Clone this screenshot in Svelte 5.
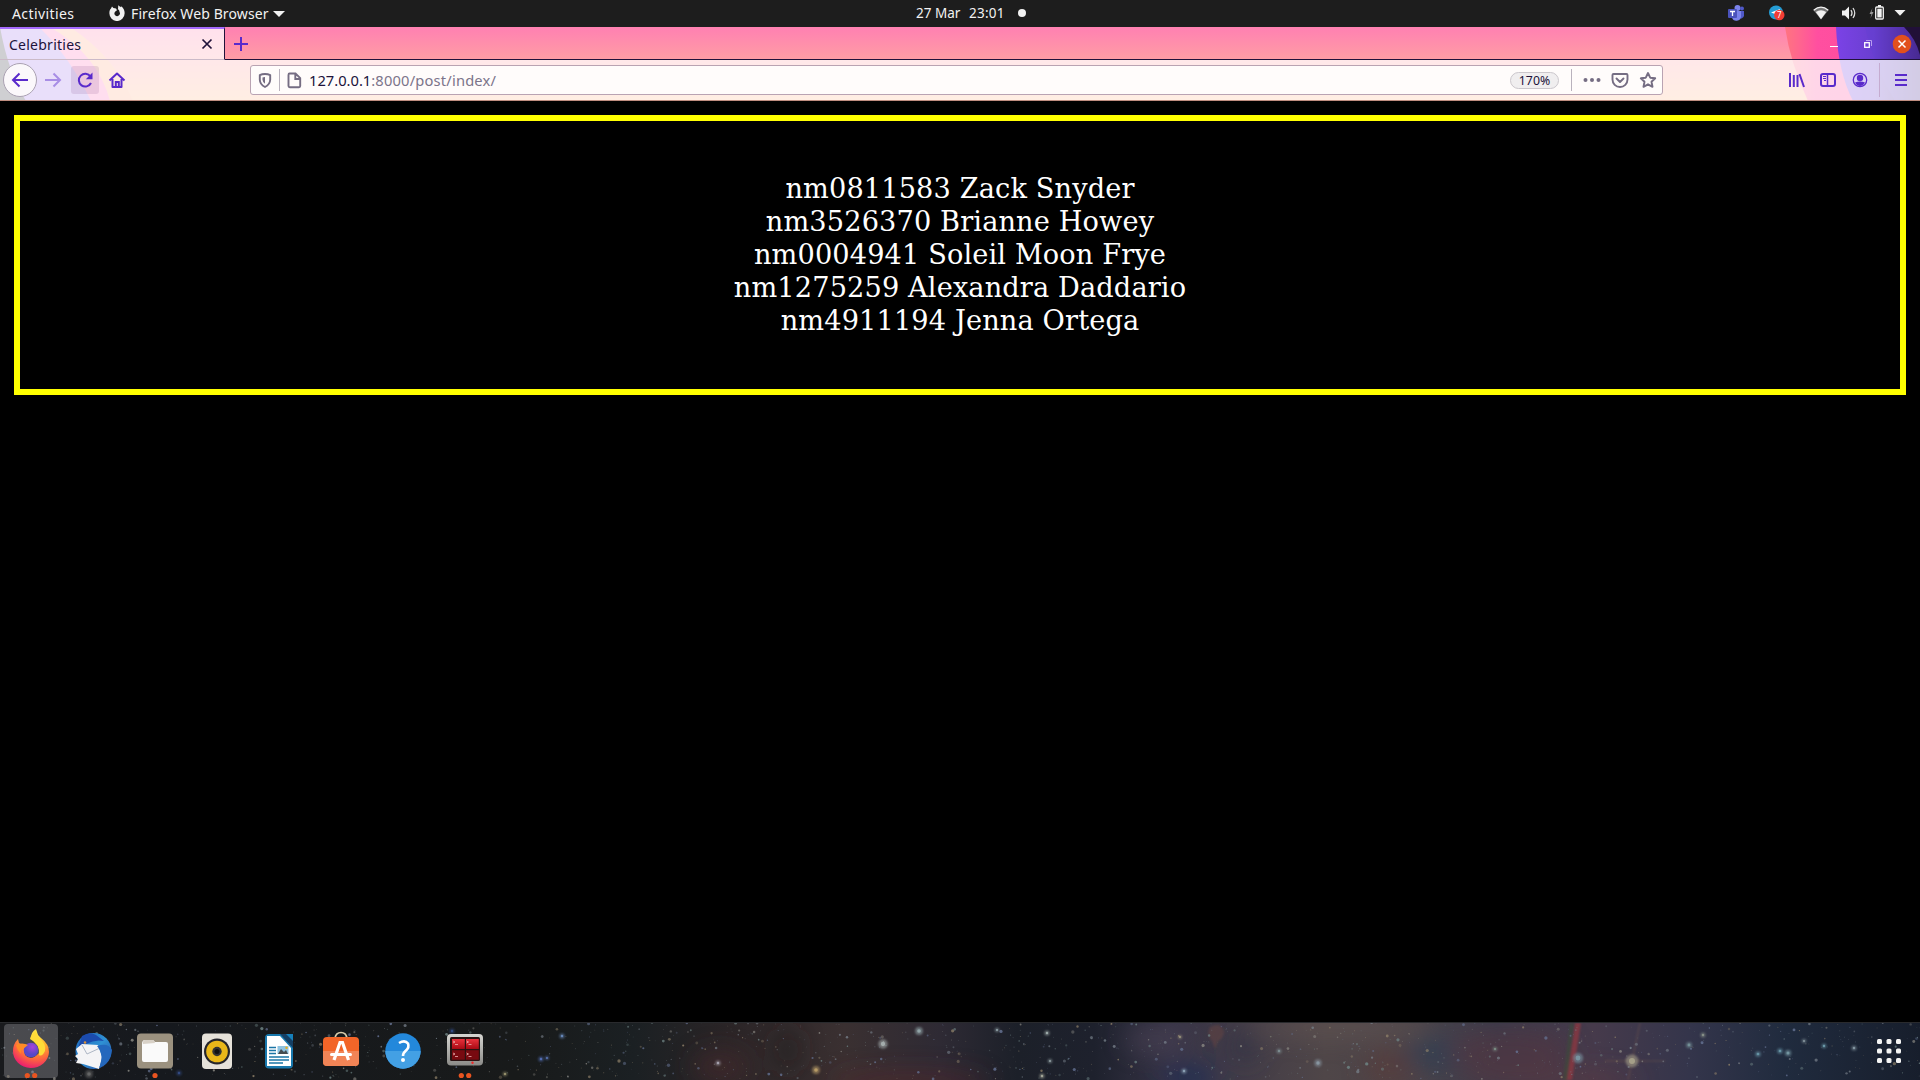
<script>
  const celebrities = [
    ['nm0811583', 'Zack Snyder'],
    ['nm3526370', 'Brianne Howey'],
    ['nm0004941', 'Soleil Moon Frye'],
    ['nm1275259', 'Alexandra Daddario'],
    ['nm4911194', 'Jenna Ortega'],
  ];

  // Small seeded generator so the star field is the same on every load.
  let seed = 4711;
  const rnd = () => (seed = (seed * 16807) % 2147483647) / 2147483647;
  const tints = ['#8c8a84', '#77808a', '#8f8169', '#6f8585', '#667394'];
  const stars = Array.from({ length: 1250 }, () => ({
    x: rnd() * 1920,
    y: rnd() * 57,
    r: 0.4 + Math.pow(rnd(), 4) * 1.3,
    o: 0.3 + rnd() * 0.55,
    c: tints[Math.floor(rnd() * 5)],
  }));
  const bright = [
    [562, 14, 2, '#6687b8'], [541, 37, 2, '#526eb5'], [547, 36, 1.6, '#5c78b8'], [505, 52, 1.8, '#a09a74'],
    [658, 42, 2, '#a6a2ae'], [728, 48, 3.4, '#b79b67'], [883, 22, 3.6, '#a3acac'], [919, 9, 3, '#91a4a8'],
    [816, 48, 3, '#b79b67'], [718, 41, 2, '#a6a2ae'],
    [997, 8, 1.8, '#8f9fa5'], [1047, 11, 2, '#9daaa9'], [1050, 39, 1.8, '#8f9da0'], [1042, 54, 2, '#a3a698'],
    [1184, 49, 2, '#8ba0b4'], [1180, 15, 1.6, '#a09a80'], [1318, 41, 2.8, '#8795a0'], [1279, 29, 2, '#7d8d90'],
    [1495, 27, 1.8, '#7f9389'], [1578, 36, 4, '#7893a0'], [1632, 39, 5, '#a59f88'], [1689, 23, 2.4, '#738f96'],
    [1703, 13, 2, '#868f87'], [1758, 32, 2.2, '#6693a4'], [1780, 29, 2.2, '#6693a4'], [1788, 31, 2.5, '#7395a0'],
    [1824, 24, 1.9, '#6b9aaa'], [1854, 26, 2, '#8396a0'], [1804, 19, 1.8, '#85949c'], [89, 52, 3, '#656666'],
    [179, 51, 2, '#334a82'], [452, 9, 2, '#334a82'],
  ].filter(([x]) => x !== 658 && x !== 728);
  const dotsGrid = [0, 1, 2, 3, 4, 5, 6, 7, 8];
</script>

<div class="desktop">
  <header class="topbar">
    <span class="activities">Activities</span>
    <svg class="fx" width="16" height="16" viewBox="0 0 16 16"><path fill="#f2f2f2" d="M3 1.4 4.4 3 7 3.6 8 5.3 6.3 6.5A2.7 2.7 0 1 0 10.5 7C10.4 5.3 9.5 4.6 8.8 4.3 9.3 3.5 9 2.6 9.3.2c1 .5 1.7 1.2 2.1 2l.6-1c2.7 1.7 3.8 4.5 3.6 7.3A7.6 7.6 0 0 1 .4 8.4C.3 6 .9 4.5 2 3.500z" /></svg>
    <span class="app">Firefox Web Browser</span>
    <i class="caret"></i>
    <div class="clock"><span class="date">27 Mar</span><span class="time">23:01</span><i></i></div>
    <div class="tray">
      <svg width="220" height="27" viewBox="0 0 220 27">
        <circle cx="37.500" cy="8" r="3" fill="#7b83eb" /><circle cx="42" cy="8.500" r="2" fill="#5059c9" />
        <path fill="#5059c9" d="M38 11h6v5a3.500 3.500 0 0 1-5 2z" /><path fill="#7b83eb" d="M32 11h9v5.500a4.600 4.600 0 0 1-9 1z" />
        <rect x="28" y="9" width="9" height="9" rx="1" fill="#4b53bc" /><path d="M30 11.500h5M32.500 11.500V16" stroke="#fff" stroke-width="1.300" />
        <circle cx="76" cy="12.500" r="7" fill="#259cd4" /><path d="M71 12.500 80 9l-1 7-4-2z" fill="#fff" />
        <circle cx="79.300" cy="15" r="5.200" fill="#f23c34" /><text x="79.300" y="18.200" class="badge" text-anchor="middle">7</text>
        <path d="M113.500 10.200Q121 3.800 128.500 10.200L121 19.500Z" fill="#777" /><path d="M113.700 10.200Q121 4 128.300 10.200" fill="none" stroke="#f2f2f2" stroke-width="1.300" /><path d="M115.800 12Q121 8.500 126.200 12L121 19.300Z" fill="#f2f2f2" />
        <path d="M142 10.500h3l4-4v13l-4-4h-3z" fill="#f2f2f2" /><path d="M151 10q2 3 0 6M153 8q3.500 5 0 10" fill="none" stroke="#ddd" stroke-width="1.300" />
        <path d="M172.500 8 169.500 14h2l-1 4 3-6h-2z" fill="#999" />
        <path d="M178 5h3v2h-3z" fill="#f2f2f2" /><rect x="175.700" y="7" width="7.600" height="12" rx="1" fill="none" stroke="#f2f2f2" stroke-width="1.300" /><rect x="177.300" y="8.700" width="4.400" height="8.800" fill="#f2f2f2" />
        <path d="M194.500 10h11l-5.500 5.700z" fill="#f2f2f2" />
      </svg>
    </div>
  </header>

  <div class="browser">
    <svg class="theme" width="1920" height="74" viewBox="0 0 1920 74">
      <defs>
        <linearGradient id="pink" x2="0" y2="1"><stop stop-color="#ff80b2" /><stop offset=".45" stop-color="#ff9ea4" /><stop offset="1" stop-color="#ffb889" /></linearGradient>
        <linearGradient id="hot" x2="1" y2="0"><stop stop-color="#ff7480" /><stop offset=".1" stop-color="#ff668e" /><stop offset=".24" stop-color="#ff4fa0" /><stop offset="1" stop-color="#fa4a9c" /></linearGradient>
        <linearGradient id="vio" x2="1" y2="0"><stop stop-color="#7b42e6" /><stop offset=".45" stop-color="#6a3fd0" /><stop offset="1" stop-color="#3a1f70" /></linearGradient>
      </defs>
      <rect width="1920" height="74" fill="url(#pink)" />
      <path d="M0 0H70Q115 30 133 74H0z" fill="#ffad88" /><path d="M0 0H50Q98 28 110 74H0z" fill="#ff75bb" />
      <path d="M0 0H39Q70 30 91 74H0z" fill="#a579eb" /><path d="M0 0Q8 45 26 74H0z" fill="#383645" />
      <path d="M1785 0Q1790 35 1808 74H1920V0z" fill="url(#hot)" />
      <path d="M1836 0Q1838 45 1853 74H1920V0z" fill="url(#vio)" />
      <path d="M1865 0Q1874 40 1895 74H1920V0z" fill="#6240d0" opacity=".35" />
      <path d="M1904 0Q1916 12 1920 28V0z" fill="#211038" />
    </svg>
    <div class="tabs">
      <div class="tab">
        <span>Celebrities</span>
        <svg width="12" height="12" viewBox="0 0 12 12"><path d="m1.500 1.500 9 9m0-9-9 9" stroke="#20123a" stroke-width="1.700" /></svg>
      </div>
      <svg class="plus" width="14" height="14" viewBox="0 0 14 14"><path d="M7 0v14M0 7h14" stroke="#592acb" stroke-width="2" /></svg>
      <svg class="winctl" width="100" height="33" viewBox="0 0 100 33">
        <path d="M10 19.500h8" stroke="#fff" /><path d="M46 13.500h5.500V19" fill="none" stroke="#b79df0" />
        <rect x="44.700" y="15.700" width="4.600" height="4.600" fill="none" stroke="#fff" stroke-width="1.300" />
        <circle cx="82" cy="17" r="9.300" fill="#e2501c" /><path d="m78.500 13.500 7 7m0-7-7 7" stroke="#fff" stroke-width="1.500" />
      </svg>
    </div>
    <div class="nav">
      <svg class="navicons" width="140" height="40" viewBox="0 0 140 40" fill="none" stroke="#592acb" stroke-width="2">
        <circle cx="20" cy="20" r="16.500" fill="#fbf8fb" stroke="#aaa1b2" stroke-width="1" />
        <path d="M28 20H13m6.500-6.500L13 20l6.500 6.500" />
        <path d="M45 20h15m-6.500-6.500L60 20l-6.500 6.500" opacity=".45" />
        <rect x="71" y="6" width="28" height="28" rx="3" fill="#8a5590" fill-opacity=".17" stroke="none" />
        <path d="M90.500 16.500A6.400 6.400 0 1 0 91 23" /><path d="M92.500 12.500v6.700H85.800z" fill="#592acb" stroke="none" />
        <path d="m109.500 20.500 7.500-7 7.500 7M112.500 19v8h9V19" stroke-linejoin="round" /><path d="M115.800 27v-5h3v5" />
      </svg>
      <div class="url">
        <svg width="56" height="28" viewBox="0 0 56 28" fill="none" stroke="#756d83" stroke-width="1.900">
          <path d="M14 8q-3 0-5.200 1.200v4.500Q9 18.500 14 21q5-2.500 5.200-7.300V9.200Q17 8 14 8z" /><path d="M14 11q-1.500 0-2.500.5v2.300q.2 2.700 2.500 4z" fill="#756d83" stroke="none" />
          <path d="M28.500 3v22" stroke="#b9b2bd" stroke-width="1" />
          <path d="M38.500 7.500h6l4.700 4.700v7.800q0 1.200-1.200 1.200h-9.200q-1.300 0-1.300-1.200V9q0-1.500 1-1.500zM44.300 8v5h5" />
        </svg>
        <span class="address"><b>127.0.0.1</b>:8000/post/index/</span>
        <span class="zoom">170%</span>
        <svg width="91" height="28" viewBox="0 0 91 28" fill="none" stroke="#756d83" stroke-width="1.900">
          <path d="M.500 3v22" stroke="#b9b2bd" stroke-width="1" />
          <g fill="#756d83" stroke="none"><circle cx="14.500" cy="14" r="2" /><circle cx="21" cy="14" r="2" /><circle cx="27.500" cy="14" r="2" /></g>
          <path d="M42.500 8h13q1 0 1 1v4.500a7.500 7.500 0 0 1-15 0V9q0-1 1-1zM45.500 12.500l3.500 3.500 3.500-3.500" stroke-linejoin="round" stroke-linecap="round" />
          <path d="m77 7 2.200 4.700 5 .6-3.700 3.500 1 5-4.500-2.500-4.500 2.500 1-5-3.700-3.500 5-.6z" stroke-linejoin="round" />
        </svg>
      </div>
      <svg class="tools" width="140" height="40" viewBox="0 0 140 40" fill="none" stroke="#592acb" stroke-width="2">
        <path d="M10 13v14M13.800 15v12M17.500 15v12M19.500 14l4.500 13" />
        <rect x="41" y="14" width="14" height="12" rx="2" /><path d="M47.500 14v12" stroke-width="1.500" /><path d="M43 16.500h3M43 18.500h3M44 20.500h2" stroke-width="1" />
        <circle cx="80" cy="20" r="6.700" stroke-width="1.300" /><circle cx="80" cy="18" r="3.200" fill="#592acb" stroke="none" /><path d="M75 22.500q5-2 10 0-2 3.500-5 3.500t-5-3.500z" fill="#592acb" stroke="none" />
        <path d="M99.500 3v34" stroke="#c5abd0" stroke-width="1" />
        <path d="M115 15h12M115 20h12M115 25h12" />
      </svg>
    </div>
  </div>

  <main>
    <section>
      {#each celebrities as [id, name]}
        <div class="person">{id} {name}</div>
      {/each}
    </section>
  </main>

  <footer class="dock">
    <svg width="1920" height="58" viewBox="0 0 1920 58">
      <defs>
        <linearGradient id="sky" x2="1" y2="0">
          <stop stop-color="#191a1d" /><stop offset=".08" stop-color="#16191e" /><stop offset=".27" stop-color="#181a1a" /><stop offset=".33" stop-color="#1b2023" /><stop offset=".38" stop-color="#2b2527" />
          <stop offset=".44" stop-color="#3a3031" /><stop offset=".49" stop-color="#2e2a34" /><stop offset=".53" stop-color="#1c2029" /><stop offset=".57" stop-color="#1e212d" />
          <stop offset=".61" stop-color="#373446" /><stop offset=".64" stop-color="#413b47" /><stop offset=".69" stop-color="#4f4648" /><stop offset=".74" stop-color="#4a4349" />
          <stop offset=".78" stop-color="#393b4b" /><stop offset=".83" stop-color="#463a4b" /><stop offset=".88" stop-color="#34354b" /><stop offset=".93" stop-color="#202b3e" /><stop offset="1" stop-color="#171e2c" />
        </linearGradient>
        <filter id="haze" x="-30%" y="-50%" width="160%" height="200%"><feGaussianBlur stdDeviation="12" /></filter>
        <filter id="glow" x="-100%" y="-100%" width="300%" height="300%"><feGaussianBlur stdDeviation="1" /></filter>
        <radialGradient id="flame" cx=".65" cy=".1" r=".95"><stop stop-color="#fff04e" /><stop offset=".4" stop-color="#ffb42e" /><stop offset=".7" stop-color="#ff693c" /><stop offset="1" stop-color="#e81873" /></radialGradient>
        <radialGradient id="globe" cx=".6" cy=".3"><stop stop-color="#a944d9" /><stop offset="1" stop-color="#5848c8" /></radialGradient>
        <linearGradient id="bird" x2="1" y2="1"><stop stop-color="#1c62b6" /><stop offset=".5" stop-color="#2f91d4" /><stop offset="1" stop-color="#26479f" /></linearGradient>
        <linearGradient id="red" x2="0" y2="1"><stop stop-color="#e8323c" /><stop offset="1" stop-color="#a90a14" /></linearGradient>
        <linearGradient id="metal" x2="0" y2="1"><stop stop-color="#d6d6d2" /><stop offset="1" stop-color="#8b8b88" /></linearGradient>
      </defs>
      <rect width="1920" height="58" fill="url(#sky)" />
      <g filter="url(#haze)" opacity=".6">
        <ellipse cx="720" cy="45" rx="28" ry="16" fill="#482b2d" /><ellipse cx="788" cy="28" rx="12" ry="22" fill="#211e1e" />
        <ellipse cx="910" cy="60" rx="80" ry="10" fill="#58282b" /><ellipse cx="1190" cy="55" rx="30" ry="12" fill="#142c5c" />
        <ellipse cx="1155" cy="18" rx="30" ry="12" fill="#51465a" /><ellipse cx="1245" cy="25" rx="14" ry="16" fill="#2b2d45" />
        <ellipse cx="1340" cy="5" rx="90" ry="10" fill="#665855" />
        <ellipse cx="1390" cy="45" rx="25" ry="20" fill="#5b3a38" /><ellipse cx="1440" cy="32" rx="35" ry="16" fill="#283d57" />
        <ellipse cx="1510" cy="30" rx="60" ry="25" fill="#553640" /><ellipse cx="1550" cy="58" rx="90" ry="8" fill="#63373c" />
      </g>
      <path d="M1210 5q12-6 14 5-1 7-6 9l-3 8-3-8q-6-6-2-14z" fill="#684443" opacity=".5" filter="url(#glow)" />
      <path d="M1575 1h6l-9 57h-6z" fill="#9b3940" opacity=".65" filter="url(#glow)" /><path d="M1570 1h4l-7 57h-4z" fill="#395336" opacity=".45" filter="url(#glow)" />
      <path d="M1640 1l-12 57M1605 39h60" stroke="#84614f" stroke-width="1.500" opacity=".3" filter="url(#glow)" />
      {#each stars as s}<circle cx={s.x} cy={s.y} r={s.r} fill={s.c} opacity={s.o} />{/each}
      {#each bright as [x, y, r, c]}<circle cx={x} cy={y} r={r * 1.3} fill={c} opacity=".6" filter="url(#glow)" /><circle cx={x} cy={y} r={r * 0.6} fill={c} />{/each}
      <path d="M0 .500h1920" stroke="#292a2d" />

      <rect x="4" y="2" width="54" height="54" rx="4" fill="#a5a7ab" fill-opacity=".35" />
      <path d="M13 29q0-7 5-12l1 4 4 2q4-2 4 1l-3 4 1 5q6 7 14-2 2-6-4-10l-4-5q0-6 5-9l2 6 3 3q8 6 8 14A18 16.500 0 0 1 13 29z" fill="url(#flame)" />
      <circle cx="31" cy="28" r="7.300" fill="url(#globe)" /><path d="M16 23q6-3 12 0l-5 4q-3 1-2 5-4-4-5-9z" fill="#ff8b25" />
      <path d="M30 17q1-5 6-8 1 5 5 9 5 4 4 11-3 6-6 4 1-11-9-16z" fill="#ffdc38" />

      <circle cx="93.500" cy="29" r="18" fill="url(#bird)" /><path d="M82 14q8-5 14-1l8 6q-9-2-18 3l-8 4z" fill="#1b4bad" />
      <path d="M76 27 82 22l16 1 4 12-3 12-16-5-7-1 2-4-3-3 3-2z" fill="#f4f4f6" /><path d="m82 23 5 9 13-6" fill="none" stroke="#aeb7c5" /><path d="M97 24q8 9 2 22 12-5 13-18-4-8-15-4z" fill="#2468bd" /><circle cx="85" cy="20.500" r="1.300" fill="#d99339" />

      <rect x="137" y="11.500" width="36" height="35" rx="4" fill="#9b917f" /><path d="M142 22q0-4 3-4h8l2 2h11q2 0 2 2v16q0 2-2 2h-22q-2 0-2-2z" fill="#fafafa" /><path d="M143 22v-2q0-2 2-2h8q1 0 2 3z" fill="#d8d1c7" />

      <rect x="202" y="11.500" width="30" height="35.500" rx="4" fill="#e6e2da" /><circle cx="217" cy="29.500" r="13" fill="#25252b" /><circle cx="217" cy="29.500" r="10.800" fill="#e9b719" /><circle cx="217" cy="29.500" r="4.700" fill="#333" /><circle cx="217" cy="29.500" r="2.500" fill="#111" />

      <rect x="265" y="12" width="28" height="34.500" rx="4" fill="#1878ad" /><path d="M267 14h13l11 12v18h-24z" fill="#fff" /><path d="M280 12h13v14z" fill="#153f64" /><path d="M286 12h7v7z" fill="#1680bb" />
      <path d="M269 25.500h7M269 28.500h7M269 31.500h7M269 35h20M269 38h20M269 41h14" stroke="#1b75a6" stroke-width="1.300" /><rect x="277.500" y="24" width="11" height="8" fill="#8fc3e0" /><path d="m278 32 3-5 3 3 2-2 2 4z" fill="#454c50" /><circle cx="286.500" cy="25.800" r="1.200" fill="#e8af20" />

      <path d="M335 16q1-5.500 6-5.500t6 5.500" fill="none" stroke="#d9ccab" stroke-width="1.700" /><rect x="323" y="15" width="36" height="29" rx="4" fill="#f26528" /><path d="M323 29h36v11q0 4-4 4h-28q-4 0-4-4z" fill="#f18456" />
      <path d="m334 38 6-17.500h2.500l6 17.500" fill="none" stroke="#fff" stroke-width="3.200" /><path d="M331.500 32.500h19" stroke="#fff" stroke-width="3" stroke-linecap="round" />

      <circle cx="403" cy="29" r="17.700" fill="#2388db" /><path d="M385.300 29h35.400a17.700 17.700 0 0 1-35.400 0z" fill="#43a0e4" /><path d="M399 21q6-3.500 9 .5 1.500 4-2 7-3 2.500-3 5.500" fill="none" stroke="#fff" stroke-width="2.600" /><circle cx="403" cy="38" r="2" fill="#fff" />

      <rect x="447" y="12" width="36" height="31.500" rx="4" fill="url(#metal)" /><rect x="450" y="15" width="30" height="24" rx="1.500" fill="#2a1212" />
      <g fill="url(#red)"><rect x="452" y="17" width="12.800" height="10" /><rect x="466" y="17" width="12.800" height="10" /></g>
      <g fill="#780a10"><rect x="452" y="28.200" width="12.800" height="9.500" /><rect x="466" y="28.200" width="12.800" height="9.500" /></g>
      <path d="m453 19 2 1-2 1m2 1.500h3m8.500-3.500 2 1-2 1m2 1.500h3M453 31l2 1-2 1m2 1.500h3m8.500-3.500 2 1-2 1m2 1.500h3" fill="none" stroke="#ecb0b0" stroke-width=".8" /><circle cx="472.500" cy="40.800" r="1.200" fill="#f02828" />
      <g fill="#e95420"><circle cx="27.300" cy="53.500" r="2.600" /><circle cx="34.700" cy="53.500" r="2.600" /><circle cx="155" cy="53.500" r="2.600" /><circle cx="461.300" cy="53.500" r="2.600" /><circle cx="468.700" cy="53.500" r="2.600" /></g>
      {#each dotsGrid as i}<rect x={1877 + (i % 3) * 9.500} y={17 + Math.floor(i / 3) * 9.500} width="5" height="5" rx="1.500" fill="#f4f4f4" />{/each}
    </svg>
  </footer>
</div>

<style>
  :global(body) { margin: 0; background: #000; overflow: hidden; }
  svg { display: block; flex: none; }
  .desktop { width: 1920px; height: 1080px; display: flex; flex-direction: column; background: #000; font-family: 'Noto Sans', 'Open Sans', sans-serif; }
  .topbar { height: 27px; display: flex; align-items: center; background: #1d1d1d; color: #f2f2f2; font-size: 14px; line-height: 25px; white-space: nowrap; position: relative; }
  .activities { width: 97px; padding-left: 12px; padding-bottom: 1px; letter-spacing: 0.400px; }
  .app { margin-left: 6px; padding-bottom: 1px; width: 138px; letter-spacing: 0.120px; }
  .fx { margin-top: -2px; }
  .caret { margin-left: 4px; border: 6px solid transparent; border-top-color: #f2f2f2; border-bottom: 0; }
  .clock { position: absolute; left: 916px; top: 0; height: 26px; display: flex; align-items: center; font-size: 13.500px; }
  .date { width: 53px; }
  .time { width: 49px; letter-spacing: 0.250px; }
  .clock i { width: 8px; height: 8px; border-radius: 50%; background: #f2f2f2; }
  .tray { margin-left: auto; }
  .badge { font-size: 8px; fill: #fff; }
  .browser { height: 74px; position: relative; display: flex; flex-direction: column; }
  .theme { position: absolute; inset: 0; }
  .tabs { position: relative; height: 33px; display: flex; align-items: center; }
  .tab { width: 225px; height: 33px; box-sizing: border-box; padding: 0 11px 0 9px; display: flex; align-items: center; justify-content: space-between; background: rgba(255, 255, 255, 0.76); border-top: 2px solid #a66bff; border-right: 1px solid #20123a; border-bottom: 1px solid #cbbac8; color: #20123a; font-size: 14px; letter-spacing: 0.250px; }
  .plus { margin-left: 9px; }
  .tabs::after { content: ''; position: absolute; left: 225px; right: 0; bottom: 0; height: 1px; background: #20123a; }
  .winctl { margin-left: auto; }
  .nav { position: relative; height: 41px; box-sizing: border-box; display: flex; align-items: center; background: rgba(255, 255, 255, 0.76); border-bottom: 1px solid #bf8d80; }
  .url { margin-left: 110px; width: 1413px; height: 30px; box-sizing: border-box; border: 1px solid #b9a3b2; border-radius: 3px; background: #fffcfb; display: flex; align-items: center; }
  .address { flex: 1; color: #7b748a; font-size: 14.700px; letter-spacing: 0.180px; margin-left: 2px; }
  .address b { font-weight: 400; color: #20123a; letter-spacing: 0; }
  .zoom { width: 49px; height: 17px; box-sizing: border-box; margin-right: 12px; border: 1px solid #cbc7cc; border-radius: 9px; background: #f0eeef; color: #20123a; font-size: 12.300px; line-height: 15px; text-align: center; }
  .tools { margin-left: auto; }
  main { flex: 1; padding: 14px; }
  section { box-sizing: border-box; height: 280px; padding-top: 51px; border: 6px solid #ff0; color: #fff; font-family: 'DejaVu Serif', serif; font-size: 27.200px; letter-spacing: 0.125px; line-height: 33px; text-align: center; }
  .dock { height: 58px; }
</style>
